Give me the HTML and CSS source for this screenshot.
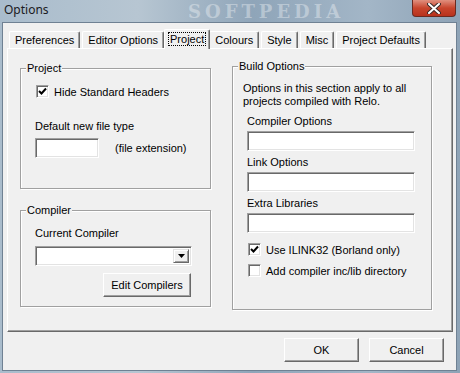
FILE: index.html
```html
<!DOCTYPE html>
<html>
<head>
<title>Options</title>
<meta charset="UTF-8">
<link rel="stylesheet" href="styles.css">
</head>
<body>
<div class="window">
  <div class="titlebar">
    <span class="title">Options</span>
    <span class="watermark">SOFTPEDIA</span>
    <div class="close-btn">
      <svg width="14" height="11" viewBox="0 0 14 11">
        <path d="M2 1 L12 10 M12 1 L2 10" stroke="#3a2a28" stroke-width="4" stroke-linecap="round"/>
        <path d="M2 1 L12 10 M12 1 L2 10" stroke="#fff" stroke-width="2" stroke-linecap="round"/>
      </svg>
    </div>
  </div>
  <div class="client">
    <div class="tabs">
      <div class="tab">Preferences</div>
      <div class="tab">Editor Options</div>
      <div class="tab active"><span class="focus">Project</span></div>
      <div class="tab">Colours</div>
      <div class="tab">Style</div>
      <div class="tab">Misc</div>
      <div class="tab">Project Defaults</div>
    </div>
    <div class="panel">
      <div class="left-col">
        <div class="group group-project">
          <span class="group-title">Project</span>
          <div class="check">
            <span class="box"><svg width="9" height="9" viewBox="0 0 9 9"><path d="M1 4 L3.5 6.5 L8 1.5" stroke="#000" stroke-width="2" fill="none"/></svg></span>
            <span>Hide Standard Headers</span>
          </div>
          <div class="label gap-top">Default new file type</div>
          <div class="inline-row">
            <div class="textbox ext"></div>
            <span>(file extension)</span>
          </div>
        </div>
        <div class="group group-compiler">
          <span class="group-title">Compiler</span>
          <div class="label">Current Compiler</div>
          <div class="combo">
            <div class="combo-btn"><svg width="7" height="4" viewBox="0 0 7 4"><path d="M0 0 H7 L3.5 4 Z" fill="#000"/></svg></div>
          </div>
          <div class="btn edit-btn">Edit Compilers</div>
        </div>
      </div>
      <div class="group group-build">
        <span class="group-title">Build Options</span>
        <p class="note">Options in this section apply to all<br>projects compiled with Relo.</p>
        <div class="fields">
          <div class="label">Compiler Options</div>
          <div class="textbox wide"></div>
          <div class="label">Link Options</div>
          <div class="textbox wide"></div>
          <div class="label">Extra Libraries</div>
          <div class="textbox wide"></div>
          <div class="check check-first">
            <span class="box"><svg width="9" height="9" viewBox="0 0 9 9"><path d="M1 4 L3.5 6.5 L8 1.5" stroke="#000" stroke-width="2" fill="none"/></svg></span>
            <span>Use ILINK32 (Borland only)</span>
          </div>
          <div class="check check-second">
            <span class="box"></span>
            <span>Add compiler inc/lib directory</span>
          </div>
        </div>
      </div>
    </div>
    <div class="footer">
      <div class="btn footer-btn">OK</div>
      <div class="btn footer-btn">Cancel</div>
    </div>
  </div>
</div>
</body>
</html>
```

FILE: styles.css
```css
body {
    margin: 0;
    font-family: "Liberation Sans", Arial, sans-serif;
    font-size: 11px;
    color: #000;
}
.window {
    width: 460px;
    height: 373px;
    box-sizing: border-box;
    background: linear-gradient(to right, #a9bccc, #b7c6d2 30%, #8fa5b9 55%, #a3b6c7 80%, #8ea3b6);
    overflow: hidden;
}
.titlebar {
    position: relative;
    height: 22px;
    display: flex;
    align-items: flex-start;
    justify-content: space-between;
}
.title {
    font-family: "Noto Sans", sans-serif;
    font-size: 12px;
    line-height: 20px;
    padding-left: 4px;
    color: #1a1a22;
}
.watermark {
    position: absolute;
    left: 188px;
    top: 2px;
    font-family: "DejaVu Serif", serif;
    font-weight: bold;
    font-size: 18px;
    letter-spacing: 4px;
    line-height: 19px;
    color: rgba(255, 255, 255, 0.35);
}
.close-btn {
    width: 44px;
    height: 17px;
    margin-right: 4px;
    box-sizing: border-box;
    border: 1px solid #6b2a20;
    border-top: none;
    border-radius: 0 0 4px 4px;
    background: linear-gradient(#e0907f, #c8452d 50%, #b8321c);
    display: flex;
    align-items: center;
    justify-content: center;
}
.client {
    margin: 0 3px 0 2px;
    height: 349px;
    box-sizing: border-box;
    border: 1px solid #6f8193;
    background: #f0f0f0;
}
.tabs {
    display: flex;
    align-items: flex-end;
    height: 19px;
    margin: 6px 0 0 6px;
}
.tab {
    height: 17px;
    box-sizing: border-box;
    padding: 0 5px;
    margin-right: 2px;
    line-height: 17px;
    border-top: 1px solid #fff;
    border-left: 1px solid #fff;
    border-right: 1px solid #696969;
    box-shadow: inset -1px 0 0 #a0a0a0;
    border-radius: 2px 2px 0 0;
    white-space: nowrap;
}
.tab.active {
    height: 20px;
    margin: 0 0 -1px -2px;
    padding: 0 3px;
    line-height: 18px;
    background: #f0f0f0;
    position: relative;
    z-index: 1;
}
.tab.active + .tab {
    margin-left: -1px;
}
.focus {
    border: 1px dotted #000;
    padding: 0 1px;
}
.panel {
    position: relative;
    margin-left: 4px;
    width: 446px;
    height: 284px;
    box-sizing: border-box;
    border: 1px solid;
    border-color: #fff #696969 #696969 #fff;
    box-shadow: inset -1px -1px 0 #a0a0a0;
    padding: 17px 0 0 12px;
    display: flex;
    gap: 21px;
}
.left-col {
    width: 191px;
    padding-top: 2px;
}
.group {
    position: relative;
    box-sizing: border-box;
    border: 1px solid #a0a0a0;
    box-shadow: inset 1px 1px 0 #fff, 1px 1px 0 #fff;
}
.group-title {
    position: absolute;
    top: -7px;
    left: 5px;
    padding: 0 1px;
    line-height: 13px;
    background: #f0f0f0;
}
.group-project {
    height: 121px;
    padding: 16px 0 0 14px;
}
.group-compiler {
    height: 97px;
    margin-top: 21px;
    padding: 16px 0 0 14px;
}
.group-build {
    width: 200px;
    height: 244px;
    padding: 15px 0 0 10px;
}
.label {
    line-height: 13px;
}
.gap-top {
    margin-top: 22px;
}
.check {
    display: flex;
    align-items: center;
    gap: 5px;
    height: 13px;
    margin-left: 1px;
}
.box {
    width: 13px;
    height: 13px;
    box-sizing: border-box;
    background: #fff;
    border: 1px solid;
    border-color: #a0a0a0 #fff #fff #a0a0a0;
    box-shadow: inset 1px 1px 0 #696969, inset -1px -1px 0 #e3e3e3;
    display: flex;
    align-items: center;
    justify-content: center;
    flex-shrink: 0;
}
.inline-row {
    display: flex;
    align-items: center;
    gap: 16px;
    margin-top: 5px;
}
.textbox {
    height: 20px;
    box-sizing: border-box;
    background: #fff;
    border: 1px solid;
    border-color: #a0a0a0 #fff #fff #a0a0a0;
    box-shadow: inset 1px 1px 0 #696969, inset -1px -1px 0 #e3e3e3;
}
.ext {
    width: 64px;
}
.wide {
    width: 168px;
    margin: 3px 0 5px;
}
.combo {
    width: 157px;
    height: 20px;
    margin-top: 6px;
    box-sizing: border-box;
    background: #fff;
    border: 1px solid;
    border-color: #a0a0a0 #fff #fff #a0a0a0;
    box-shadow: inset 1px 1px 0 #696969, inset -1px -1px 0 #e3e3e3;
    display: flex;
    justify-content: flex-end;
    padding: 2px;
}
.combo-btn {
    width: 16px;
    box-sizing: border-box;
    background: #f0f0f0;
    border: 1px solid;
    border-color: #e3e3e3 #696969 #696969 #e3e3e3;
    box-shadow: inset 1px 1px 0 #fff, inset -1px -1px 0 #a0a0a0;
    display: flex;
    align-items: center;
    justify-content: center;
}
.btn {
    box-sizing: border-box;
    height: 24px;
    background: #f0f0f0;
    border: 1px solid;
    border-color: #fff #696969 #696969 #fff;
    box-shadow: inset -1px -1px 0 #a0a0a0;
    display: flex;
    align-items: center;
    justify-content: center;
}
.edit-btn {
    width: 88px;
    margin: 7px 0 0 68px;
}
.note {
    margin: 0;
    line-height: 13px;
}
.fields {
    margin: 7px 0 0 4px;
}
.check-first {
    margin-top: 10px;
}
.check-second {
    margin-top: 8px;
}
.footer {
    display: flex;
    justify-content: flex-end;
    gap: 10px;
    margin-top: 6px;
    padding-right: 12px;
}
.footer-btn {
    width: 75px;
}
```
